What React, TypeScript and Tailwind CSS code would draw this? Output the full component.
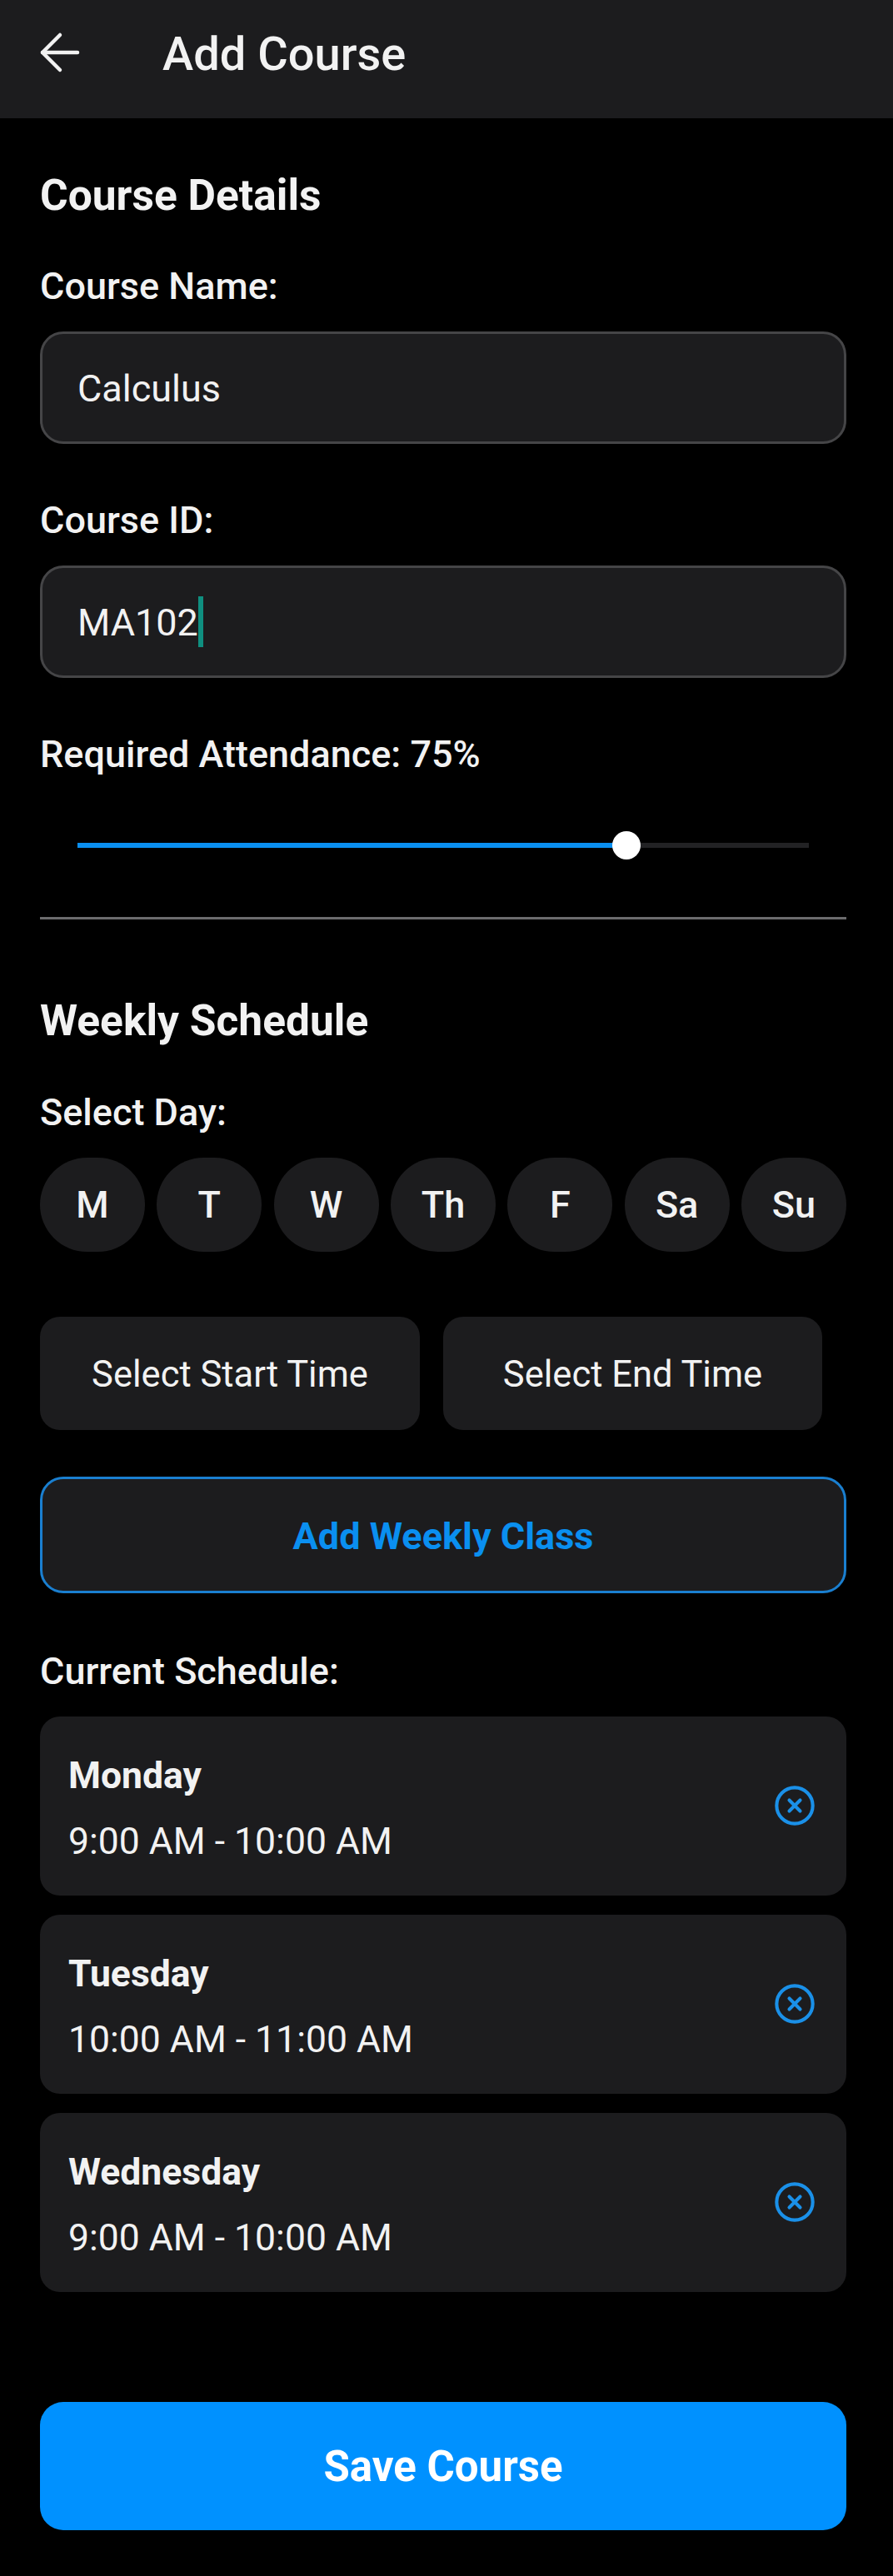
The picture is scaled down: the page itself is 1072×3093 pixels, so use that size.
import { ArrowLeft, CircleX } from "lucide-react";

const DAYS = ["M", "T", "W", "Th", "F", "Sa", "Su"];

const SCHEDULE = [
  { day: "Monday", time: "9:00 AM - 10:00 AM" },
  { day: "Tuesday", time: "10:00 AM - 11:00 AM" },
  { day: "Wednesday", time: "9:00 AM - 10:00 AM" },
];

function Field({ label, value, caret }: { label: string; value: string; caret?: boolean }) {
  return (
    <div>
      <p className="text-[45px] leading-[56px] font-medium text-[#f2f2f2]">{label}</p>
      <div className="mt-[26px] flex h-[135px] items-center rounded-[28px] border-[3px] border-[#454547] bg-[#1c1c1e] pl-[42px] text-[45px] text-[#f2f2f2]">
        <span className="mt-[3px]">{value}</span>
        {caret && <span className="h-[61px] w-[6px] bg-[#0f8f80]" />}
      </div>
    </div>
  );
}

export default function App() {
  return (
    <div className="h-[3093px] overflow-hidden bg-black font-['Roboto',sans-serif] text-[#f2f2f2]">
      <header className="flex h-[142px] items-center bg-[#1c1c1e] pl-[36px]">
        <ArrowLeft size={72} strokeWidth={1.5} className="-mt-[16px] text-[#f2f2f2]" />
        <h1 className="-mt-[12px] ml-[87px] text-[56px] font-medium">Add Course</h1>
      </header>

      <main className="pr-[56px] pl-[48px]">
        <h2 className="mt-[63px] text-[51.5px] leading-[60px] font-bold">Course Details</h2>
        <div className="mt-[51px] flex flex-col gap-[64px]">
          <Field label="Course Name:" value="Calculus" />
          <Field label="Course ID:" value="MA102" caret />
        </div>

        <p className="mt-[64px] text-[45px] leading-[56px] font-medium">Required Attendance: 75%</p>
        <div className="relative mx-[45px] mt-[78px] flex h-[6px]">
          <div className="w-[659px] bg-[#0a8ff0]" />
          <div className="flex-1 bg-[#222224]" />
          <span className="absolute top-[-14px] left-[642px] h-[34px] w-[34px] rounded-full bg-white" />
        </div>
        <hr className="mt-[83px] border-t-[3px] border-[#6b6b6d]" />

        <h2 className="mt-[92px] text-[51.5px] leading-[60px] font-bold">Weekly Schedule</h2>
        <p className="mt-[52px] text-[45px] leading-[56px] font-medium">Select Day:</p>
        <div className="mt-[26px] flex justify-between">
          {DAYS.map((d) => (
            <div
              key={d}
              className="flex h-[113px] w-[126px] items-center justify-center rounded-full bg-[#1c1c1e] text-[45px] font-medium"
            >
              {d}
            </div>
          ))}
        </div>

        <div className="mt-[78px] flex gap-[28px]">
          <div className="flex h-[136px] w-[456px] items-center justify-center rounded-[24px] bg-[#1c1c1e] pt-[3px] text-[43.5px]">
            Select Start Time
          </div>
          <div className="flex h-[136px] w-[455px] items-center justify-center rounded-[24px] bg-[#1c1c1e] pt-[3px] text-[43.5px]">
            Select End Time
          </div>
        </div>

        <div className="mt-[56px] flex h-[140px] items-center justify-center rounded-[28px] border-[3px] border-[#1a7fd0] bg-[#1c1c1e] pt-[4px] text-[45px] font-bold text-[#0a8ff0]">
          Add Weekly Class
        </div>

        <p className="mt-[66px] text-[45px] leading-[56px] font-medium">Current Schedule:</p>
        <div className="mt-[26px] flex flex-col gap-[23px]">
          {SCHEDULE.map((s) => (
            <div key={s.day} className="flex h-[215px] items-center justify-between rounded-[24px] bg-[#1c1c1e] pr-[36px] pl-[34px]">
              <div className="pt-[6px]">
                <p className="text-[44.5px] leading-[56px] font-bold">{s.day}</p>
                <p className="mt-[23px] text-[44.5px] leading-[56px]">{s.time}</p>
              </div>
              <CircleX size={52} strokeWidth={1.9} className="-mt-[1px] text-[#1a90e8]" />
            </div>
          ))}
        </div>

        <div className="mt-[132px] flex h-[154px] items-center justify-center rounded-[28px] bg-[#0091ff] pt-[2px] text-[51px] font-bold text-white">
          Save Course
        </div>
      </main>
    </div>
  );
}
